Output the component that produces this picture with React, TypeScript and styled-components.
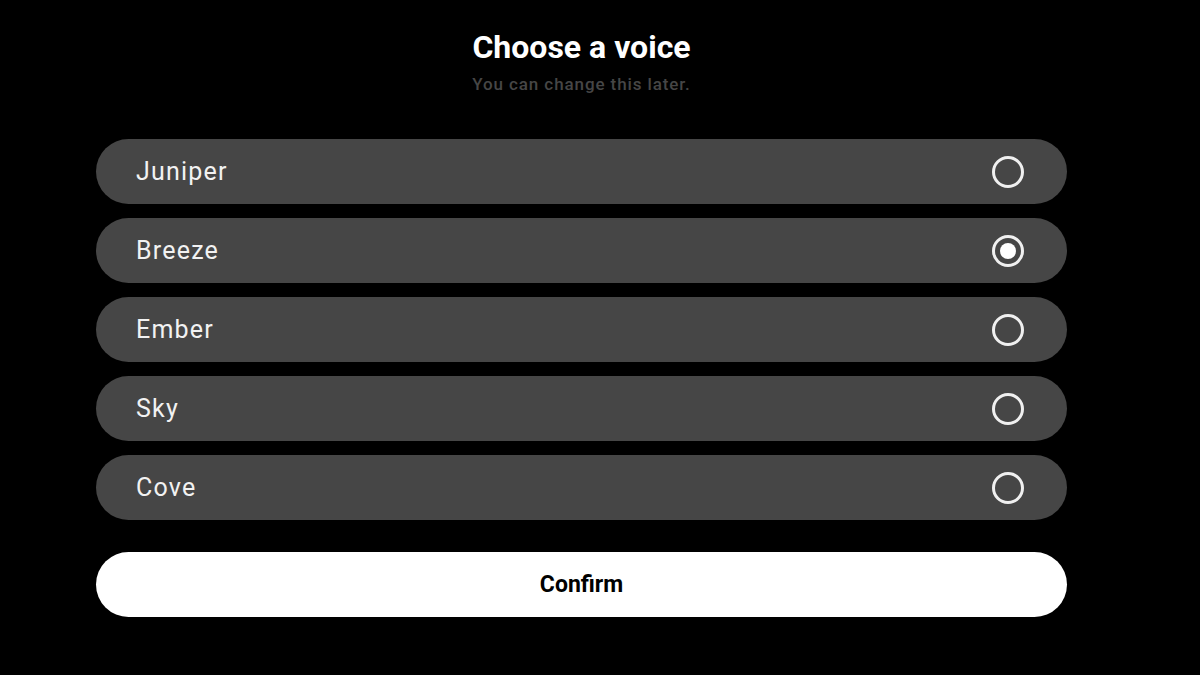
import { useState } from "react";
import styled, { createGlobalStyle } from "styled-components";

const GlobalStyle = createGlobalStyle`
  html, body {
    margin: 0;
    padding: 0;
    background: #000;
  }
  body {
    font-family: Roboto, "Noto Sans", sans-serif;
  }
`;

const voices = ["Juniper", "Breeze", "Ember", "Sky", "Cove"];

const App = () => {
  const [selected, setSelected] = useState("Breeze");

  return (
    <>
      <GlobalStyle />
      <Page>
        <Panel>
          <Header>
            <Title>Choose a voice</Title>
            <Subtitle>You can change this later.</Subtitle>
          </Header>
          <List>
            {voices.map((v) => (
              <Row key={v} onClick={() => setSelected(v)}>
                <Name>{v}</Name>
                <Radio $checked={selected === v} />
              </Row>
            ))}
          </List>
          <ConfirmButton>Confirm</ConfirmButton>
        </Panel>
      </Page>
    </>
  );
};

const Page = styled.div`
  width: 1200px;
  height: 675px;
  background: #000;
  box-sizing: border-box;
  padding: 28px 0 0 96px;
`;

const Panel = styled.div`
  width: 971px;
  display: flex;
  flex-direction: column;
`;

const Header = styled.div`
  display: flex;
  flex-direction: column;
  align-items: center;
`;

const Title = styled.h1`
  margin: 0;
  font-size: 32px;
  line-height: 38px;
  font-weight: 700;
  color: #fff;
`;

const Subtitle = styled.p`
  margin: 7px 0 0;
  font-size: 17px;
  line-height: 22px;
  font-weight: 500;
  color: #464646;
  letter-spacing: 0.9px;
`;

const List = styled.div`
  display: flex;
  flex-direction: column;
  gap: 14px;
  margin-top: 44px;
`;

const Row = styled.div`
  height: 65px;
  border-radius: 33px;
  background: #464646;
  display: flex;
  align-items: center;
  justify-content: space-between;
  padding: 0 43px 0 40px;
  cursor: pointer;
`;

const Name = styled.span`
  font-size: 25px;
  color: #f2f2f2;
  letter-spacing: 1.2px;
`;

const Radio = styled.span<{ $checked: boolean }>`
  width: 32px;
  height: 32px;
  box-sizing: border-box;
  border-radius: 50%;
  border: 3px solid #f0f0f0;
  display: flex;
  align-items: center;
  justify-content: center;

  &::after {
    content: "";
    display: ${(p) => (p.$checked ? "block" : "none")};
    width: 16px;
    height: 16px;
    border-radius: 50%;
    background: #fff;
  }
`;

const ConfirmButton = styled.button`
  margin-top: 32px;
  height: 65px;
  border: none;
  border-radius: 33px;
  background: #fff;
  color: #000;
  font-family: Roboto, "Noto Sans", sans-serif;
  font-size: 23px;
  font-weight: 700;
  cursor: pointer;
`;

export default App;
